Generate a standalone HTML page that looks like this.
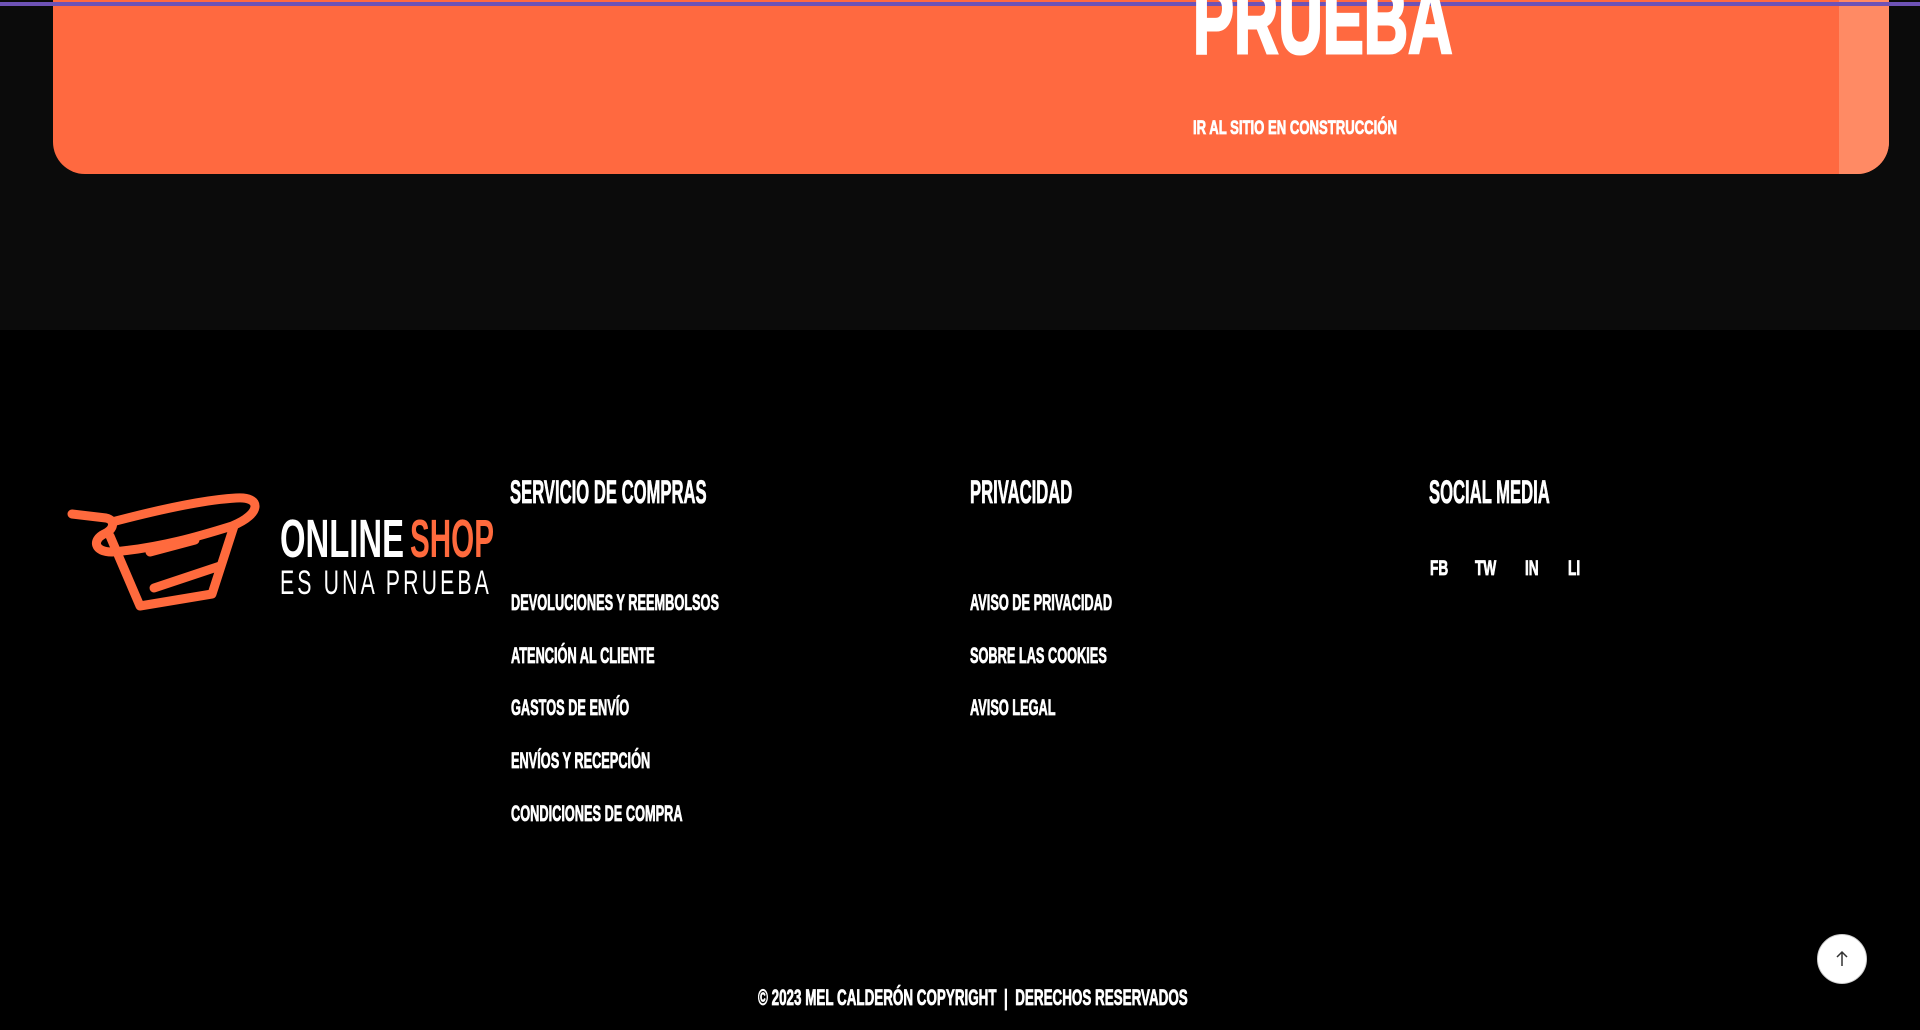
<!DOCTYPE html>
<html><head><meta charset="utf-8"><style>
*{margin:0;padding:0;box-sizing:border-box}
body{width:1920px;height:1030px;background:#000;position:relative;overflow:hidden;font-family:"Liberation Sans",sans-serif;font-weight:bold;color:#fff}
.top{position:absolute;left:0;top:0;width:1920px;height:330px;background:#0b0b0b}
.card{position:absolute;left:53px;top:0;width:1836px;height:174px;background:#ff6940;border-radius:0 0 32px 32px;overflow:hidden}
.strip{position:absolute;right:0;top:0;width:50px;height:174px;background:#ff8a64}
.line{position:absolute;left:0;top:2px;width:1920px;height:4px;background:#6e52b6}
.t{position:absolute;white-space:nowrap;transform-origin:left top;line-height:1;-webkit-text-stroke:0.8px #fff}
</style></head><body>
<div class="top"></div>
<div class="card"><div class="strip"></div></div>
<div class="line"></div>
<div class="t" style="left:1193px;top:-27px;font-size:96px;transform:scaleX(0.64);-webkit-text-stroke:3px #fff">PRUEBA</div>
<div class="t" style="left:1193px;top:119px;font-size:19px;transform:scaleX(0.69)">IR AL SITIO EN CONSTRUCCIÓN</div>

<svg style="position:absolute;left:0;top:0" width="600" height="640">
<g fill="none" stroke="#ff6a3d" stroke-width="9" stroke-linecap="round" stroke-linejoin="round">
<path d="M72,514 L106,518 C116,520 114,530 104,534 C92,540 94,552 112,552 C160,548 200,536 232,526 C262,514 262,496 236,498 C200,500 150,512 112,522"/>
<path d="M110,536 L140,606 L212,594 L234,526"/>
<path d="M150,552 L195,540"/>
<path d="M154,588 L220,566"/>
</g>
<text x="280" y="557" font-family="Liberation Sans Narrow, Liberation Sans, sans-serif" font-weight="bold" font-size="54" fill="#fff" textLength="124" lengthAdjust="spacingAndGlyphs">ONLINE</text>
<text x="410" y="557" font-family="Liberation Sans Narrow, Liberation Sans, sans-serif" font-weight="bold" font-size="54" fill="#ff6a3d" textLength="84" lengthAdjust="spacingAndGlyphs">SHOP</text>
<text x="280" y="594" font-family="Liberation Sans Narrow, Liberation Sans, sans-serif" font-weight="normal" font-size="34" letter-spacing="5" fill="#fff" textLength="212" lengthAdjust="spacingAndGlyphs">ES UNA PRUEBA</text>
</svg>

<div class="t" style="left:510px;top:476px;font-size:32px;transform:scaleX(0.52)">SERVICIO DE COMPRAS</div>
<div class="t" style="left:970px;top:476px;font-size:32px;transform:scaleX(0.52)">PRIVACIDAD</div>
<div class="t" style="left:1429px;top:476px;font-size:32px;transform:scaleX(0.52)">SOCIAL MEDIA</div>

<div class="t" style="left:511px;top:592px;font-size:22px;transform:scaleX(0.58)">DEVOLUCIONES Y REEMBOLSOS</div>
<div class="t" style="left:511px;top:645px;font-size:22px;transform:scaleX(0.58)">ATENCIÓN AL CLIENTE</div>
<div class="t" style="left:511px;top:697px;font-size:22px;transform:scaleX(0.58)">GASTOS DE ENVÍO</div>
<div class="t" style="left:511px;top:750px;font-size:22px;transform:scaleX(0.58)">ENVÍOS Y RECEPCIÓN</div>
<div class="t" style="left:511px;top:803px;font-size:22px;transform:scaleX(0.58)">CONDICIONES DE COMPRA</div>

<div class="t" style="left:970px;top:592px;font-size:22px;transform:scaleX(0.58)">AVISO DE PRIVACIDAD</div>
<div class="t" style="left:970px;top:645px;font-size:22px;transform:scaleX(0.58)">SOBRE LAS COOKIES</div>
<div class="t" style="left:970px;top:697px;font-size:22px;transform:scaleX(0.58)">AVISO LEGAL</div>

<div class="t" style="left:1430px;top:558px;font-size:21px;transform:scaleX(0.65)">FB</div>
<div class="t" style="left:1475px;top:558px;font-size:21px;transform:scaleX(0.65)">TW</div>
<div class="t" style="left:1525px;top:558px;font-size:21px;transform:scaleX(0.65)">IN</div>
<div class="t" style="left:1568px;top:558px;font-size:21px;transform:scaleX(0.65)">LI</div>

<div class="t" style="left:758px;top:987px;font-size:22px;transform:scaleX(0.61)">© 2023 MEL CALDERÓN COPYRIGHT &nbsp;|&nbsp; DERECHOS RESERVADOS</div>

<div style="position:absolute;left:1817px;top:934px;width:50px;height:50px;border-radius:50%;background:#fff;border:1px solid #ccc"></div>
<svg style="position:absolute;left:1832px;top:949px" width="20" height="20"><path d="M10,3 L10,17 M5,8 L10,3 L15,8" stroke="#333" stroke-width="1.5" fill="none"/></svg>
</body></html>
